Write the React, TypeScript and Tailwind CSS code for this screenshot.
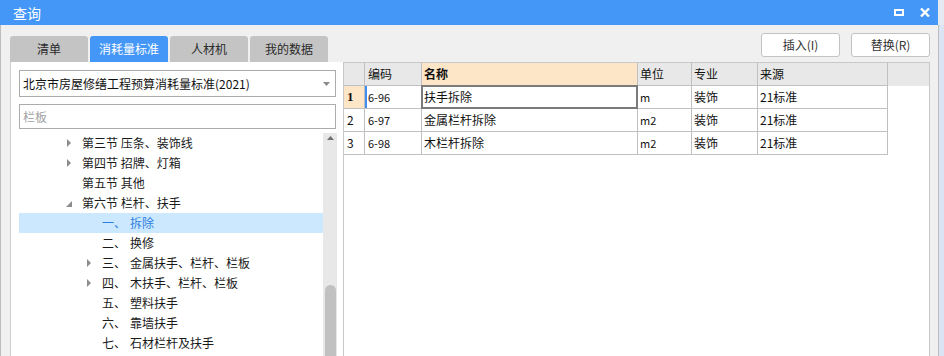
import React from 'react';

const FONT = "font-['Noto_Sans_CJK_SC',sans-serif]";

const TABS = ['清单', '消耗量标准', '人材机', '我的数据'];

interface TreeNode {
  level: 1 | 2;
  num?: string;
  label: string;
  arrow?: 'closed' | 'open';
  selected?: boolean;
}

const TREE: TreeNode[] = [
  { level: 1, label: '第三节 压条、装饰线', arrow: 'closed' },
  { level: 1, label: '第四节 招牌、灯箱', arrow: 'closed' },
  { level: 1, label: '第五节 其他' },
  { level: 1, label: '第六节 栏杆、扶手', arrow: 'open' },
  { level: 2, num: '一、', label: '拆除', selected: true },
  { level: 2, num: '二、', label: '换修' },
  { level: 2, num: '三、', label: '金属扶手、栏杆、栏板', arrow: 'closed' },
  { level: 2, num: '四、', label: '木扶手、栏杆、栏板', arrow: 'closed' },
  { level: 2, num: '五、', label: '塑料扶手' },
  { level: 2, num: '六、', label: '靠墙扶手' },
  { level: 2, num: '七、', label: '石材栏杆及扶手' },
];

const ROWS = [
  { code: '6-96', name: '扶手拆除', unit: 'm', major: '装饰', source: '21标准' },
  { code: '6-97', name: '金属栏杆拆除', unit: 'm2', major: '装饰', source: '21标准' },
  { code: '6-98', name: '木栏杆拆除', unit: 'm2', major: '装饰', source: '21标准' },
];

function Arrow({ kind }: { kind: 'closed' | 'open' }) {
  if (kind === 'open') {
    return (
      <svg width="8" height="8" viewBox="0 0 8 8" className="mt-[2px]">
        <polygon points="6,1 6,7 0,7" fill="#8c8c8c" />
      </svg>
    );
  }
  return (
    <svg width="6" height="8" viewBox="0 0 6 8" className="ml-[1px]">
      <polygon points="0,0 4,4 0,8" fill="#8c8c8c" />
    </svg>
  );
}

function TreeRow({ node }: { node: TreeNode }) {
  const sel = node.selected;
  return (
    <div
      className={`h-[20px] flex items-center text-[12px] ${
        sel ? 'bg-[#cce8ff] text-[#2b7de0]' : 'text-[#1a1a1a]'
      } ${node.level === 1 ? 'pl-[47px]' : 'pl-[67px]'}`}
    >
      <div className="w-[16px] flex items-center">{node.arrow && <Arrow kind={node.arrow} />}</div>
      {node.num && <span className="w-[28px]">{node.num}</span>}
      <span className="whitespace-nowrap">{node.label}</span>
    </div>
  );
}

export default function App() {
  return (
    <div className={`w-[944px] h-[356px] overflow-hidden flex flex-col bg-[#e4e9f2] ${FONT}`}>
      {/* title bar */}
      <div className="h-[25px] w-[938px] shrink-0 bg-[#4497f7] flex items-center pl-[13px] pr-[8px]">
        <span className="text-white text-[14px] leading-none">查询</span>
        <div className="ml-auto flex items-center gap-[16px]">
          <svg width="10" height="7" viewBox="0 0 10 7">
            <rect x="1" y="1" width="8" height="5" fill="none" stroke="#fff" strokeWidth="2" />
          </svg>
          <svg width="10" height="9" viewBox="0 0 10 9">
            <path d="M1 0.5 L9 8.5 M9 0.5 L1 8.5" stroke="#fff" strokeWidth="2.4" />
          </svg>
        </div>
      </div>

      <div className="flex flex-1 min-h-0">
        {/* dialog body */}
        <div className="w-[939px] shrink-0 bg-[#f0f0f0] border-l border-r border-[#bdbdbd] flex flex-col pl-[9px] pr-[8px]">
          {/* tabs + buttons */}
          <div className="h-[37px] shrink-0 flex justify-between">
            <div className="self-end flex gap-[2px]">
              {TABS.map((t, i) => (
                <div
                  key={t}
                  className={`w-[78px] h-[26px] rounded-t-[3px] flex items-center justify-center text-[12px] ${
                    i === 1 ? 'bg-[#4497f7] text-white' : 'bg-[#c4c4c4] text-[#2a2a2a]'
                  }`}
                >
                  {t}
                </div>
              ))}
            </div>
            <div className="mt-[8px] flex gap-[11px]">
              {['插入(I)', '替换(R)'].map(b => (
                <div
                  key={b}
                  className="w-[79px] h-[24px] rounded-[3px] border border-[#c3c3c3] bg-white flex items-center justify-center text-[12px] text-[#333]"
                >
                  {b}
                </div>
              ))}
            </div>
          </div>

          {/* content */}
          <div className="flex flex-1 min-h-0">
            {/* left panel */}
            <div className="w-[333px] shrink-0 bg-white border-l border-[#cfcfcf] pl-[8px] pt-[8px] flex flex-col">
              <div className="w-[317px] h-[27px] border border-[#ababab] flex items-center pl-[3px] pr-[5px] text-[12px] text-[#111]">
                <span>北京市房屋修缮工程预算消耗量标准(2021)</span>
                <svg width="7" height="4" viewBox="0 0 7 4" className="ml-auto">
                  <polygon points="0,0 7,0 3.5,4" fill="#8a8a8a" />
                </svg>
              </div>
              <div className="mt-[7px] w-[317px] h-[25px] border border-[#ababab] flex items-center pl-[3px] text-[12px] text-[#a3a3a3]">
                栏板
              </div>
              <div className="mt-[4px] flex flex-1 min-h-0">
                <div className="w-[304px]">
                  {TREE.map((n, i) => (
                    <TreeRow key={i} node={n} />
                  ))}
                </div>
                <div className="w-[14px] bg-[#e8e8e8] flex flex-col items-center">
                  <svg width="7" height="4" viewBox="0 0 7 4" className="mt-[3px]">
                    <polygon points="0,4 7,4 3.5,0" fill="#707070" />
                  </svg>
                  <div className="mt-[145px] w-[11px] flex-1 bg-[#c1c1c1] rounded-t-full" />
                </div>
              </div>
            </div>

            {/* right panel */}
            <div className="flex-1 bg-white border-l border-t border-r border-[#c8c8c8] text-[12px] text-[#111]">
              <div className="flex h-[23px] bg-[#e8e8e8]">
                <div className="w-[21px] border-r border-b border-[#c0c0c0]" />
                <div className="w-[57px] border-r border-b border-[#c0c0c0] pl-[3px] flex items-center">编码</div>
                <div className="w-[216px] border-r border-b border-[#c0c0c0] pl-[2px] flex items-center bg-[#fde5c8] font-bold">名称</div>
                <div className="w-[54px] border-r border-b border-[#c0c0c0] pl-[2px] flex items-center">单位</div>
                <div className="w-[66px] border-r border-b border-[#c0c0c0] pl-[2px] flex items-center">专业</div>
                <div className="w-[130px] border-r border-b border-[#c0c0c0] pl-[2px] flex items-center">来源</div>
              </div>
              {ROWS.map((r, i) => (
                <div key={r.code} className="flex h-[23px]">
                  <div
                    className={`w-[21px] border-r border-b border-[#c0c0c0] pl-[3px] flex items-center ${
                      i === 0 ? 'bg-[#fde5c8] font-bold font-[Liberation_Serif,serif] text-[13px]' : 'bg-white'
                    }`}
                  >
                    {i + 1}
                  </div>
                  <div
                    className={`w-[57px] border-r border-b border-[#c0c0c0] pl-[3px] flex items-center text-[11px] ${
                      i === 0 ? 'shadow-[inset_2px_0_0_#3f8ef0]' : ''
                    }`}
                  >
                    {r.code}
                  </div>
                  <div
                    className={`w-[216px] border-r border-b border-[#c0c0c0] pl-[2px] flex items-center relative`}
                  >
                    {r.name}
                    {i === 0 && <div className="absolute -top-px -left-px -right-px bottom-[-1px] border-2 border-[#7b7b7b]" />}
                  </div>
                  <div className="w-[54px] border-r border-b border-[#c0c0c0] pl-[2px] flex items-center text-[11px]">{r.unit}</div>
                  <div className="w-[66px] border-r border-b border-[#c0c0c0] pl-[2px] flex items-center">{r.major}</div>
                  <div className="w-[130px] border-r border-b border-[#c0c0c0] pl-[2px] flex items-center">{r.source}</div>
                </div>
              ))}
            </div>
          </div>
        </div>
        <div className="flex-1 bg-[#dbe4f5]" />
      </div>
    </div>
  );
}
